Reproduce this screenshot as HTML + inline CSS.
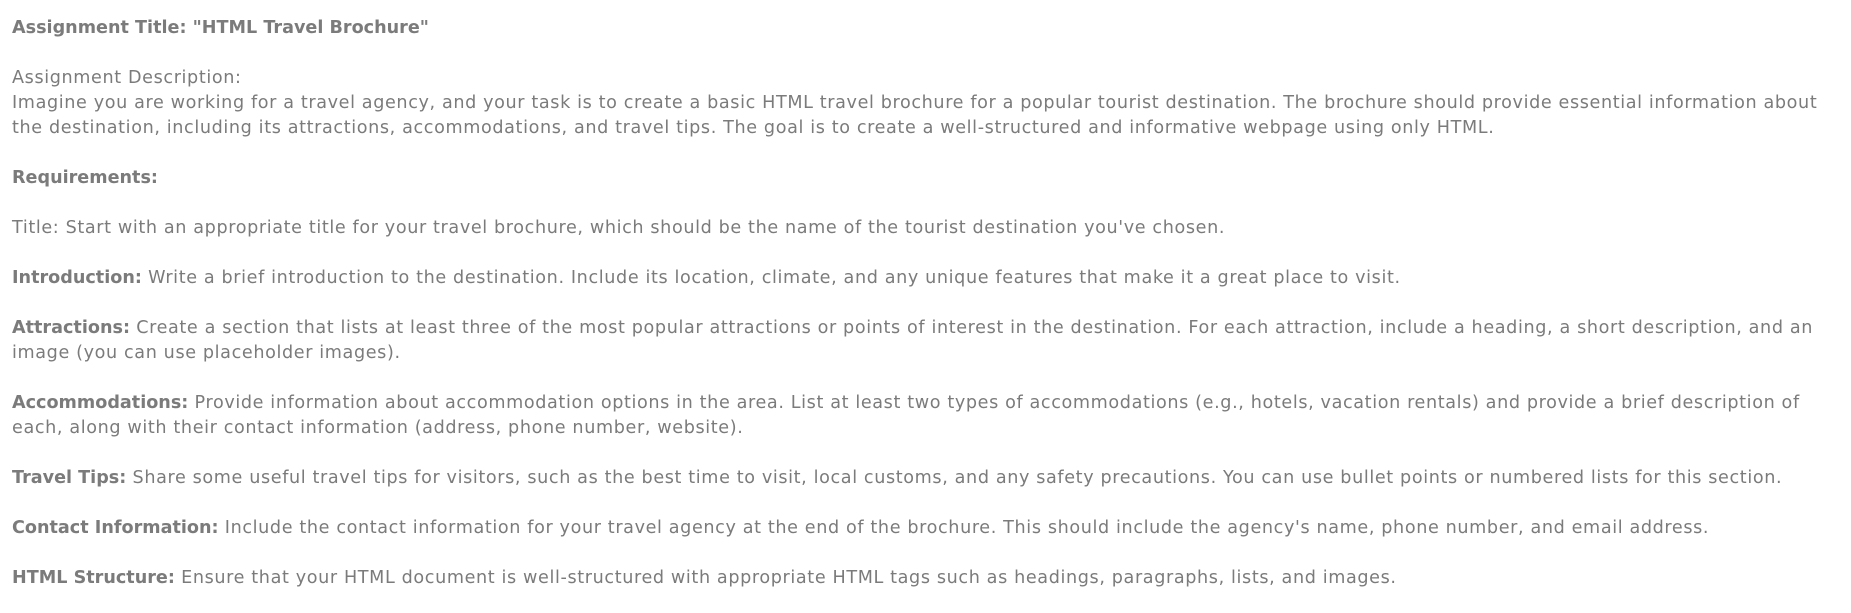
<!DOCTYPE html>
<html><head><meta charset="utf-8"><style>
html,body{margin:0;background:#fff;}
body{width:1851px;height:613px;overflow:hidden;}
.c{position:absolute;left:12px;top:16px;font-family:"DejaVu Sans","Liberation Sans",sans-serif;font-size:17.6px;letter-spacing:0.62px;line-height:25px;color:#7b7b7b;white-space:nowrap;}
b{font-weight:bold;color:#7b7b7b;letter-spacing:0px}
</style></head><body><div class="c">
<b>Assignment Title: "HTML Travel Brochure"</b><br><br>
Assignment Description:<br>
Imagine you are working for a travel agency, and your task is to create a basic HTML travel brochure for a popular tourist destination. The brochure should provide essential information about<br>
the destination, including its attractions, accommodations, and travel tips. The goal is to create a well-structured and informative webpage using only HTML.<br><br>
<b>Requirements:</b><br><br>
Title: Start with an appropriate title for your travel brochure, which should be the name of the tourist destination you've chosen.<br><br>
<b>Introduction:</b> Write a brief introduction to the destination. Include its location, climate, and any unique features that make it a great place to visit.<br><br>
<b>Attractions:</b> Create a section that lists at least three of the most popular attractions or points of interest in the destination. For each attraction, include a heading, a short description, and an<br>
image (you can use placeholder images).<br><br>
<b>Accommodations:</b> Provide information about accommodation options in the area. List at least two types of accommodations (e.g., hotels, vacation rentals) and provide a brief description of<br>
each, along with their contact information (address, phone number, website).<br><br>
<b>Travel Tips:</b> Share some useful travel tips for visitors, such as the best time to visit, local customs, and any safety precautions. You can use bullet points or numbered lists for this section.<br><br>
<b>Contact Information:</b> Include the contact information for your travel agency at the end of the brochure. This should include the agency's name, phone number, and email address.<br><br>
<b>HTML Structure:</b> Ensure that your HTML document is well-structured with appropriate HTML tags such as headings, paragraphs, lists, and images.
</div></body></html>
